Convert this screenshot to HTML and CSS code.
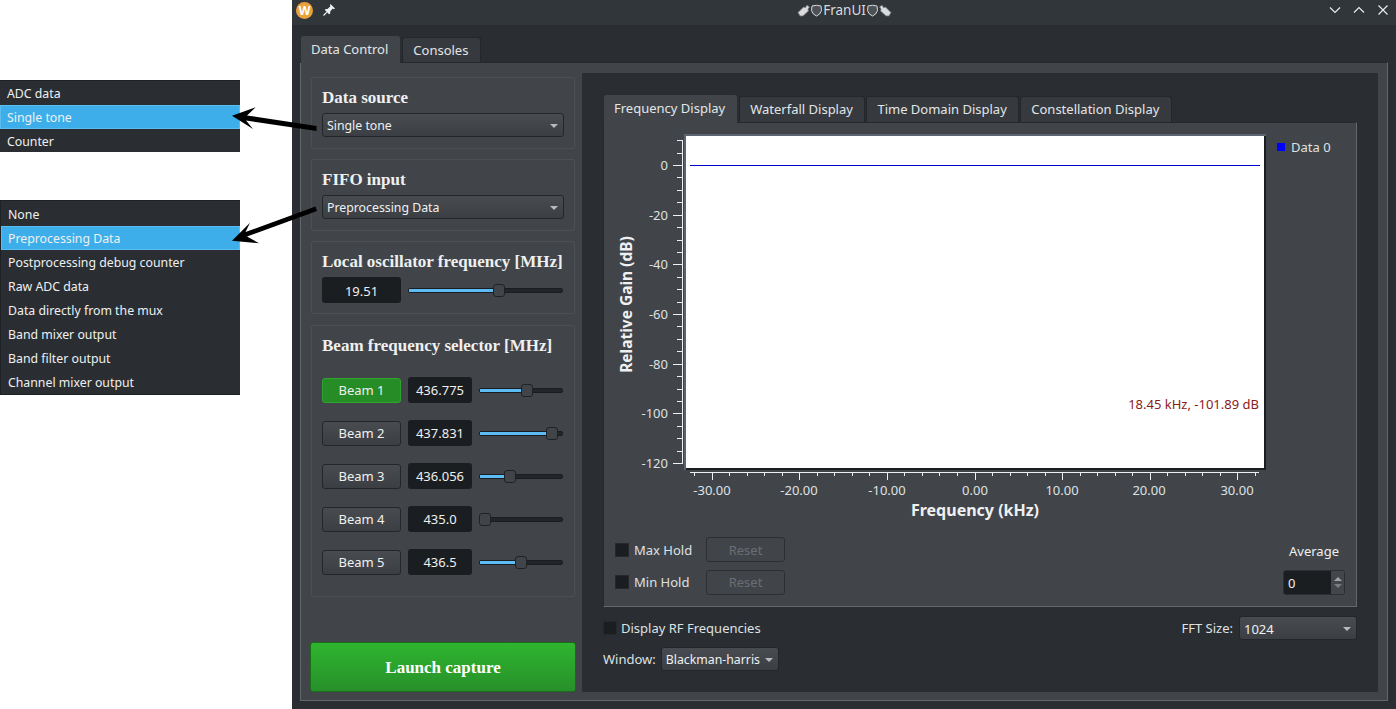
FILE: index.html
```html
<!DOCTYPE html>
<html lang="en">
<head>
    <meta charset="UTF-8">
    <title>FranUI</title>
    <link rel="stylesheet" href="styles.css">
</head>
<body>
    <div class="menus">
        <ul class="popup popup-source">
            <li>ADC data</li>
            <li class="selected">Single tone</li>
            <li>Counter</li>
        </ul>
        <ul class="popup popup-fifo">
            <li>None</li>
            <li class="selected">Preprocessing Data</li>
            <li>Postprocessing debug counter</li>
            <li>Raw ADC data</li>
            <li>Data directly from the mux</li>
            <li>Band mixer output</li>
            <li>Band filter output</li>
            <li>Channel mixer output</li>
        </ul>
    </div>

    <div class="window">
        <header class="titlebar">
            <div class="title-left">
                <span class="app-logo">W</span>
                <svg class="pin" width="14" height="14" viewBox="0 0 14 14">
                    <path d="M8.5 1 L13 5.5 L11.8 6.2 L10.8 5.6 L8.2 8.6 L8.2 10.6 L7 11.2 L2.9 7 L3.6 5.9 L5.5 5.9 L8.4 3.2 L7.9 2.2 Z" fill="#eff0f1"/>
                    <path d="M4.8 9.2 L1.5 12.5" stroke="#eff0f1" stroke-width="1.2"/>
                </svg>
            </div>
            <div class="title-text">
                <svg class="title-icon" width="13" height="13" viewBox="0 0 13 13"><path d="M1 8.500 L6.500 3 L8.500 3.500 L10 1 L12.500 3 L11 5 L11.500 7 L6 12 L3 12 Z" fill="#d8dadc" stroke="#6b7075" stroke-width=".8"/></svg>
                <svg class="title-icon" width="11" height="13" viewBox="0 0 11 13"><path d="M1 2 Q5.500 .5 10 2 L10.500 6.500 Q9.500 10.500 5.500 12 Q1.500 10.500 .5 6.500 Z" fill="#4d5257" stroke="#d8dadc"/></svg>
                <span>FranUI</span>
                <svg class="title-icon" width="11" height="13" viewBox="0 0 11 13"><path d="M1 2 Q5.500 .5 10 2 L10.500 6.500 Q9.500 10.500 5.500 12 Q1.500 10.500 .5 6.500 Z" fill="#4d5257" stroke="#d8dadc"/></svg>
                <svg class="title-icon" width="13" height="13" viewBox="0 0 13 13"><path d="M12 8.500 L6.500 3 L4.500 3.500 L3 1 L.5 3 L2 5 L1.500 7 L7 12 L10 12 Z" fill="#d8dadc" stroke="#6b7075" stroke-width=".8"/></svg>
            </div>
            <div class="title-buttons">
                <svg width="12" height="12" viewBox="0 0 12 12"><path d="M1 3.500 L6 8.500 L11 3.500" class="wm-stroke"/></svg>
                <svg width="12" height="12" viewBox="0 0 12 12"><path d="M1 8.500 L6 3.500 L11 8.500" class="wm-stroke"/></svg>
                <svg width="12" height="12" viewBox="0 0 12 12"><path d="M1.500 1.500 L10.500 10.500 M10.500 1.500 L1.500 10.500" class="wm-stroke"/></svg>
            </div>
        </header>

        <div class="main">
            <div class="tabbar outer-tabs">
                <div class="tab active">Data Control</div>
                <div class="tab">Consoles</div>
            </div>
            <div class="outer-pane">
                <div class="control-col">
                    <section class="group">
                        <h2>Data source</h2>
                        <div class="combo">Single tone<i class="caret"></i></div>
                    </section>
                    <section class="group">
                        <h2>FIFO input</h2>
                        <div class="combo">Preprocessing Data<i class="caret"></i></div>
                    </section>
                    <section class="group group-lo">
                        <h2>Local oscillator frequency [MHz]</h2>
                        <div class="lo-row">
                            <div class="field lo-field">19.51</div>
                            <div class="slider"><div class="fill" style="width:90px"></div><div class="thumb" style="left:84px"></div></div>
                        </div>
                    </section>
                    <section class="group group-beams">
                        <h2>Beam frequency selector [MHz]</h2>
                        <div class="beam-row">
                            <button class="btn beam-on">Beam 1</button>
                            <div class="field">436.775</div>
                            <div class="slider"><div class="fill" style="width:47px"></div><div class="thumb" style="left:41px"></div></div>
                        </div>
                        <div class="beam-row">
                            <button class="btn">Beam 2</button>
                            <div class="field">437.831</div>
                            <div class="slider"><div class="fill" style="width:72px"></div><div class="thumb" style="left:66px"></div></div>
                        </div>
                        <div class="beam-row">
                            <button class="btn">Beam 3</button>
                            <div class="field">436.056</div>
                            <div class="slider"><div class="fill" style="width:30px"></div><div class="thumb" style="left:24px"></div></div>
                        </div>
                        <div class="beam-row">
                            <button class="btn">Beam 4</button>
                            <div class="field">435.0</div>
                            <div class="slider"><div class="fill" style="width:0"></div><div class="thumb" style="left:-1px"></div></div>
                        </div>
                        <div class="beam-row">
                            <button class="btn">Beam 5</button>
                            <div class="field">436.5</div>
                            <div class="slider"><div class="fill" style="width:41px"></div><div class="thumb" style="left:35px"></div></div>
                        </div>
                    </section>
                    <button class="launch">Launch capture</button>
                </div>

                <div class="display-panel">
                    <div class="tabbar inner-tabs">
                        <div class="tab active">Frequency Display</div>
                        <div class="tab">Waterfall Display</div>
                        <div class="tab">Time Domain Display</div>
                        <div class="tab">Constellation Display</div>
                    </div>
                    <div class="inner-pane">
                        <svg class="plot" width="754" height="404" viewBox="603 122 754 404">
                            <rect x="684" y="134" width="582" height="336" fill="#5b6470"/>
                            <path d="M686 469 H1266 M1265 136 V470" stroke="#1b1e20" stroke-width="2" fill="none"/>
                            <rect x="686" y="136" width="578" height="332" fill="#fff"/>
                            <path d="M690 165.500 H1260" stroke="#0000cc" fill="none"/>

                            <path class="axis" d="M682.500 140 V464
                                M673 165.500 H682 M673 215.500 H682 M673 264.500 H682 M673 314.500 H682 M673 364.500 H682 M673 413.500 H682 M673 463.500 H682
                                M677 140.500 H682 M677 153.500 H682 M677 177.500 H682 M677 190.500 H682 M677 202.500 H682
                                M677 227.500 H682 M677 240.500 H682 M677 252.500 H682 M677 277.500 H682 M677 289.500 H682
                                M677 302.500 H682 M677 326.500 H682 M677 339.500 H682 M677 351.500 H682 M677 376.500 H682
                                M677 389.500 H682 M677 401.500 H682 M677 426.500 H682 M677 438.500 H682 M677 451.500 H682"/>
                            <path class="axis" d="M690 472.500 H1259
                                M712.500 473 V480 M799.500 473 V480 M887.500 473 V480 M975.500 473 V480 M1062.500 473 V480 M1150.500 473 V480 M1237.500 473 V480
                                M694.500 473 V476 M729.500 473 V476 M747.500 473 V476 M764.500 473 V476 M782.500 473 V476
                                M817.500 473 V476 M834.500 473 V476 M852.500 473 V476 M869.500 473 V476 M904.500 473 V476
                                M922.500 473 V476 M939.500 473 V476 M957.500 473 V476 M992.500 473 V476 M1010.500 473 V476
                                M1027.500 473 V476 M1045.500 473 V476 M1080.500 473 V476 M1097.500 473 V476 M1115.500 473 V476
                                M1132.500 473 V476 M1167.500 473 V476 M1185.500 473 V476 M1202.500 473 V476 M1220.500 473 V476 M1255.500 473 V476"/>

                            <g class="tick-y">
                                <text x="668" y="170">0</text>
                                <text x="668" y="220">-20</text>
                                <text x="668" y="269">-40</text>
                                <text x="668" y="319">-60</text>
                                <text x="668" y="369">-80</text>
                                <text x="668" y="418">-100</text>
                                <text x="668" y="468">-120</text>
                            </g>
                            <g class="tick-x">
                                <text x="712" y="495">-30.00</text>
                                <text x="799" y="495">-20.00</text>
                                <text x="887" y="495">-10.00</text>
                                <text x="975" y="495">0.00</text>
                                <text x="1062" y="495">10.00</text>
                                <text x="1149" y="495">20.00</text>
                                <text x="1237" y="495">30.00</text>
                            </g>
                            <text class="axis-title axis-x" x="975" y="516">Frequency (kHz)</text>
                            <text class="axis-title axis-y" transform="translate(632 304.500) rotate(-90)">Relative Gain (dB)</text>
                            <text class="marker" x="1259" y="409">18.45 kHz, -101.89 dB</text>
                            <rect x="1277" y="143" width="8" height="8" fill="#0000ff"/>
                            <text class="legend" x="1291" y="152">Data 0</text>
                        </svg>
                        <div class="hold-controls">
                            <div class="hold-grid">
                                <span class="check"></span><span class="hold-label">Max Hold</span><button class="btn btn-off">Reset</button>
                                <span class="check"></span><span class="hold-label">Min Hold</span><button class="btn btn-off">Reset</button>
                            </div>
                            <div class="average">
                                <span>Average</span>
                                <div class="spin">
                                    <span class="spin-value">0</span>
                                    <span class="spin-arrows"><i class="up"></i><i class="down"></i></span>
                                </div>
                            </div>
                        </div>
                    </div>
                    <div class="option-row">
                        <div class="check-wrap"><span class="check"></span>Display RF Frequencies</div>
                        <div class="fft-wrap">FFT Size:<div class="combo fft-combo">1024<i class="caret"></i></div></div>
                    </div>
                    <div class="window-row">Window:<div class="combo window-combo">Blackman-harris<i class="caret"></i></div></div>
                </div>
            </div>
        </div>
    </div>

    <!-- annotation arrows drawn over the screenshot -->
    <svg class="arrows" width="340" height="270" viewBox="0 0 340 270">
        <path d="M316.500 126 L316.500 131 L246 120.500 L253 129 L232 115.700 L255.700 107.300 L247 115.500 Z" fill="#000"/>
        <path d="M315.500 206.500 L317 211 L247 236.500 L259 243.300 L232 240.700 L250 222.700 L245.500 232 Z" fill="#000"/>
    </svg>
</body>
</html>
```

FILE: styles.css
```css
* {
    box-sizing: border-box;
}
body {
    margin: 0;
    width: 1396px;
    height: 709px;
    overflow: hidden;
    display: flex;
    position: relative;
    background: #fff;
    font-family: "Noto Sans", sans-serif;
    font-size: 13px;
    color: #eff0f1;
}

/* left hand popups */
.menus {
    width: 292px;
    flex: none;
    padding-top: 80px;
}
.popup {
    list-style: none;
    margin: 0;
    padding: 0;
    width: 240px;
    background: #2a2e32;
    border-top: 1px solid #1f2225;
    font-size: 12.300px;
    overflow: hidden;
}
.popup li {
    height: 24px;
    line-height: 26px;
    padding-left: 7px;
    white-space: nowrap;
}
.popup li.selected {
    background: #3daee9;
    box-shadow: inset 0 0 0 1px #5bbcef;
}
.popup-source {
    height: 72px;
}
.popup-fifo {
    margin-top: 48px;
    padding-top: 1px;
    border-left: 1px solid #1f2225;
    border-bottom: 1px solid #1f2225;
}
.arrows {
    position: absolute;
    left: 0;
    top: 0;
}

/* window */
.window {
    flex: 1;
    display: flex;
    flex-direction: column;
    background: #2a2e32;
}
.titlebar {
    height: 25px;
    flex: none;
    background: #31363b;
    display: flex;
    align-items: center;
    padding: 0 7px 5px 4px;
    justify-content: space-between;
}
.title-left {
    display: flex;
    align-items: center;
    gap: 9px;
}
.app-logo {
    width: 17px;
    height: 17px;
    border-radius: 50%;
    background: #e9a23b;
    color: #fff;
    font-size: 12px;
    font-weight: 700;
    line-height: 17px;
    text-align: center;
}
.title-text {
    display: flex;
    align-items: center;
    gap: 1px;
    color: #d8dadc;
    font-size: 13.500px;
    margin-left: 24px;
}
.title-icon {
    flex: none;
}
.title-buttons {
    display: flex;
    gap: 12px;
}
.wm-stroke {
    fill: none;
    stroke: #eff0f1;
    stroke-width: 1.100;
}
.main {
    flex: 1;
    padding: 10px 8px 8px;
    display: flex;
    flex-direction: column;
}

/* tabs */
.tabbar {
    display: flex;
    align-items: flex-end;
    gap: 1px;
    position: relative;
    z-index: 1;
}
.tab {
    height: 25px;
    line-height: 24px;
    padding: 0 12px 0 10px;
    background: #363a3f;
    border: 1px solid #23262a;
    border-bottom: 0;
    border-radius: 3px 3px 0 0;
    white-space: nowrap;
    color: #e3e5e7;
}
.tab.active {
    height: 28px;
    line-height: 27px;
    background: #41454a;
    border-color: #2a2e32;
    margin-bottom: -1px;
}
.outer-tabs {
    height: 27px;
}
.outer-pane {
    flex: 1;
    display: flex;
    gap: 6px;
    background: #41454a;
    border: 1px solid #64686d;
    border-top-color: #26292c;
    padding: 10px 9px 8px 9px;
}

/* left controls */
.control-col {
    width: 266px;
    flex: none;
    display: flex;
    flex-direction: column;
    gap: 10px;
    padding-top: 4px;
}
.group {
    height: 72px;
    margin-left: 1px;
    width: 264px;
    border: 1px solid #4c5055;
    border-radius: 2px;
    padding: 10px 10px 0;
}
.group h2 {
    margin: 0 0 5px;
    font-family: "Liberation Serif", serif;
    font-size: 17px;
    font-weight: 700;
    line-height: 20px;
    color: #eff0f1;
    white-space: nowrap;
}
.combo {
    height: 24px;
    line-height: 22px;
    padding: 1px 4px 0;
    display: flex;
    align-items: center;
    justify-content: space-between;
    border: 1px solid #23262a;
    border-radius: 3px;
    background: linear-gradient(#484c51, #3b3f44);
    color: #eff0f1;
    font-size: 12.300px;
    white-space: nowrap;
}
.caret {
    width: 0;
    height: 0;
    border-left: 4px solid transparent;
    border-right: 4px solid transparent;
    border-top: 4px solid #b8bbbd;
    margin-right: 1px;
}
.group-lo {
    height: 73px;
}
.lo-row {
    display: flex;
    align-items: center;
    gap: 7px;
}
.field {
    width: 64px;
    height: 26px;
    flex: none;
    line-height: 26px;
    text-align: center;
    background: #1b1e20;
    border-radius: 3px;
    color: #eff0f1;
}
.lo-field {
    width: 79px;
    line-height: 28px;
}
.slider {
    flex: 1;
    height: 5px;
    margin-right: 1px;
    position: relative;
    background: #232629;
    border: 1px solid #1b1e20;
    border-radius: 2px;
}
.fill {
    height: 3px;
    background: #5cbdf5;
}
.thumb {
    position: absolute;
    top: -5px;
    width: 12px;
    height: 13px;
    background: #41454a;
    border: 1px solid #1f2225;
    border-radius: 3px;
}
.group-beams {
    height: 272px;
    margin-top: 1px;
}
.group-beams h2 {
    margin-bottom: 21px;
}
.beam-row {
    display: flex;
    align-items: center;
    gap: 7px;
    height: 26px;
    margin-bottom: 17px;
}
.btn {
    width: 79px;
    height: 25px;
    flex: none;
    padding: 0;
    font: inherit;
    color: #eff0f1;
    background: linear-gradient(#484c51, #3b3f44);
    border: 1px solid #23262a;
    border-radius: 3px;
}
.beam-on {
    background: #268c26;
    border-color: #2fa52f;
}
.btn-off {
    color: #6a6e73;
    background: #41454a;
    border-color: #2c2f33;
}
.launch {
    margin-top: auto;
    height: 50px;
    padding: 2px 0 0;
    font-family: "Liberation Serif", serif;
    font-size: 17px;
    font-weight: 700;
    color: #fff;
    background: linear-gradient(#2fb52f, #27902a);
    border: 1px solid #1a6b1a;
    border-radius: 3px;
}

/* display panel */
.display-panel {
    flex: 1;
    background: #2a2e32;
    padding: 21px 21px 0;
}
.inner-tabs {
    height: 28px;
}
.inner-tabs .tab {
    height: 26px;
    line-height: 25px;
    padding-right: 11.500px;
}
.inner-tabs .tab.active {
    height: 29px;
    line-height: 27px;
    padding-right: 12px;
}
.inner-pane {
    height: 485px;
    background: #41454a;
    border: 1px solid #64686d;
    border-top-color: #26292c;
    border-left-color: #26292c;
}
.plot {
    display: block;
    margin: -1px;
}
.axis {
    fill: none;
    stroke: #eff0f1;
}
.tick-y text {
    fill: #dfe1e3;
    font-size: 13px;
    text-anchor: end;
}
.tick-x text {
    fill: #dfe1e3;
    font-size: 13px;
    text-anchor: middle;
}
.axis-title {
    fill: #eff0f1;
    font-weight: 700;
    text-anchor: middle;
}
.axis-x {
    font-size: 16px;
}
.axis-y {
    font-size: 15.500px;
}
.marker {
    fill: #8b1a1a;
    font-size: 13px;
    text-anchor: end;
}
.legend {
    fill: #dfe1e3;
    font-size: 13px;
}
.hold-controls {
    display: flex;
    justify-content: space-between;
    padding: 12px 11px 0;
}
.hold-grid {
    display: grid;
    grid-template-columns: 14px 67px 79px;
    column-gap: 5px;
    row-gap: 7px;
    align-items: center;
}
.hold-label {
    color: #dfe1e3;
}
.check {
    width: 14px;
    height: 14px;
    flex: none;
    background: #1b1e20;
    border: 1px solid #26292c;
}
.average {
    width: 62px;
    display: flex;
    flex-direction: column;
    align-items: center;
    gap: 10px;
    padding-top: 5px;
}
.spin {
    width: 62px;
    height: 25px;
    display: flex;
    background: #1b1e20;
    border: 1px solid #2c2f33;
    border-radius: 3px;
}
.spin-value {
    flex: 1;
    padding-left: 4px;
    line-height: 24px;
}
.spin-arrows {
    width: 13px;
    background: #43474c;
    display: flex;
    flex-direction: column;
    justify-content: center;
    align-items: center;
    gap: 3px;
}
.up {
    width: 0;
    height: 0;
    border-left: 4px solid transparent;
    border-right: 4px solid transparent;
    border-bottom: 4px solid #a0a3a6;
}
.down {
    width: 0;
    height: 0;
    border-left: 4px solid transparent;
    border-right: 4px solid transparent;
    border-top: 4px solid #7a7e82;
}
.option-row {
    display: flex;
    justify-content: space-between;
    align-items: center;
    margin-top: 9px;
    color: #dfe1e3;
}
.check-wrap {
    display: flex;
    align-items: center;
    gap: 4px;
}
.fft-wrap {
    display: flex;
    align-items: center;
    gap: 6px;
}
.fft-combo {
    width: 118px;
    font-size: 13px;
}
.window-row {
    display: flex;
    align-items: center;
    gap: 5px;
    margin-top: 7px;
    color: #dfe1e3;
}
.window-combo {
    width: 118px;
}
```
